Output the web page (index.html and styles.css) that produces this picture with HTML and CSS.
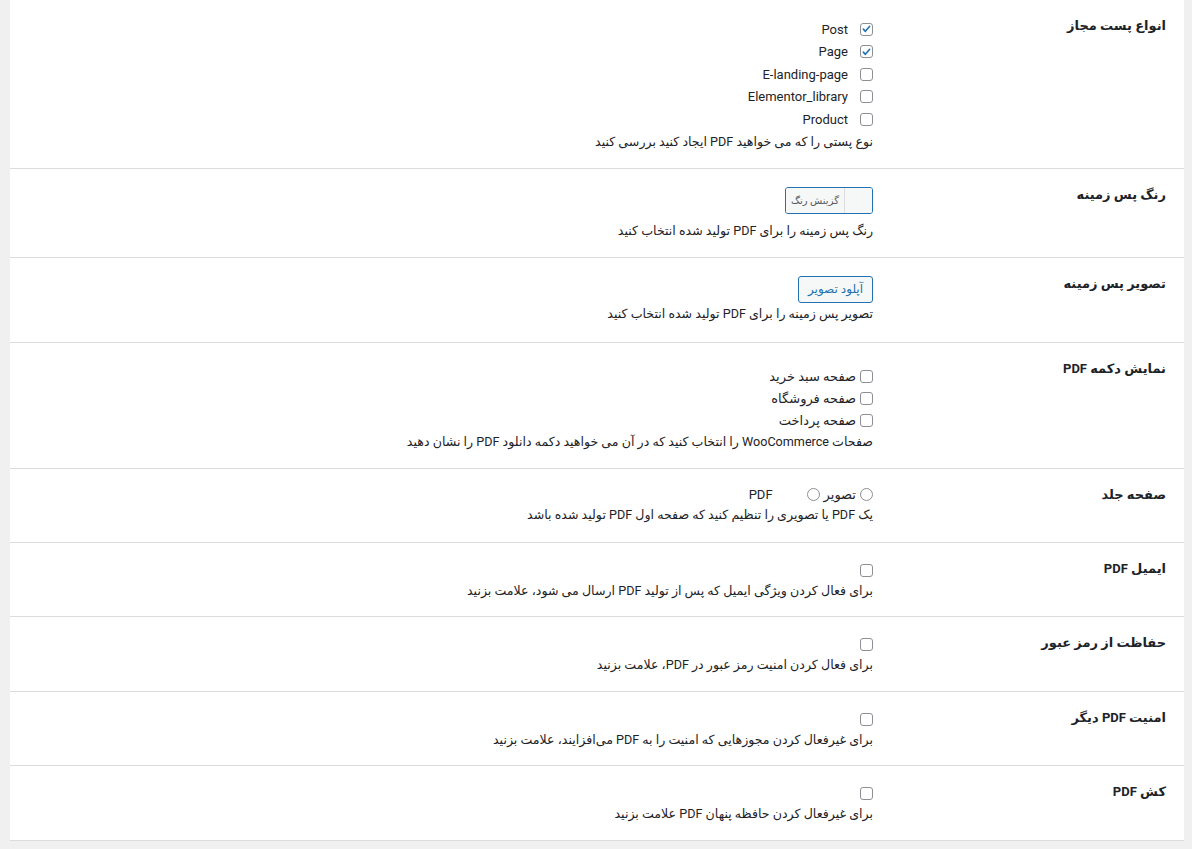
FILE: index.html
```html
<!DOCTYPE html>
<html lang="fa" dir="rtl">
<head>
<meta charset="utf-8">
<title>تنظیمات PDF</title>
<link rel="stylesheet" href="styles.css">
</head>
<body>
<div class="panel">
  <div class="row r1">
    <div class="label">انواع پست مجاز</div>
    <div class="field">
      <div class="opt spaced"><span class="cb checked"><svg viewBox="0 0 14 14"><path d="M3 7.2l2.6 2.8L11 3.6" /></svg></span><span dir="ltr">Post</span></div>
      <div class="opt spaced"><span class="cb checked"><svg viewBox="0 0 14 14"><path d="M3 7.2l2.6 2.8L11 3.6" /></svg></span><span dir="ltr">Page</span></div>
      <div class="opt spaced"><span class="cb"></span><span dir="ltr">E-landing-page</span></div>
      <div class="opt spaced"><span class="cb"></span><span dir="ltr">Elementor_library</span></div>
      <div class="opt spaced"><span class="cb"></span><span dir="ltr">Product</span></div>
      <p class="desc">نوع پستی را که می خواهید PDF ایجاد کنید بررسی کنید</p>
    </div>
  </div>
  <div class="row r2">
    <div class="label">رنگ پس زمینه</div>
    <div class="field">
      <div class="colorbtn"><span class="swatch"></span><span class="ctext">گزینش رنگ</span></div>
      <p class="desc d2">رنگ پس زمینه را برای PDF تولید شده انتخاب کنید</p>
    </div>
  </div>
  <div class="row r3">
    <div class="label">تصویر پس زمینه</div>
    <div class="field">
      <div class="upload">آپلود تصویر</div>
      <p class="desc d3">تصویر پس زمینه را برای PDF تولید شده انتخاب کنید</p>
    </div>
  </div>
  <div class="row r4">
    <div class="label">نمایش دکمه PDF</div>
    <div class="field">
      <div class="opt tight"><span class="cb"></span><span>صفحه سبد خرید</span></div>
      <div class="opt tight"><span class="cb"></span><span>صفحه فروشگاه</span></div>
      <div class="opt tight"><span class="cb"></span><span>صفحه پرداخت</span></div>
      <p class="desc">صفحات WooCommerce را انتخاب کنید که در آن می خواهید دکمه دانلود PDF را نشان دهید</p>
    </div>
  </div>
  <div class="row r5">
    <div class="label">صفحه جلد</div>
    <div class="field">
      <div class="opt radios"><span class="rd"></span><span>تصویر</span><span class="rd second"></span><span class="pdf" dir="ltr">PDF</span></div>
      <p class="desc">یک PDF یا تصویری را تنظیم کنید که صفحه اول PDF تولید شده باشد</p>
    </div>
  </div>
  <div class="row rs">
    <div class="label">ایمیل PDF</div>
    <div class="field">
      <div class="opt single"><span class="cb"></span></div>
      <p class="desc">برای فعال کردن ویژگی ایمیل که پس از تولید PDF ارسال می شود، علامت بزنید</p>
    </div>
  </div>
  <div class="row rs r75">
    <div class="label">حفاظت از رمز عبور</div>
    <div class="field">
      <div class="opt single"><span class="cb"></span></div>
      <p class="desc">برای فعال کردن امنیت رمز عبور در PDF، علامت بزنید</p>
    </div>
  </div>
  <div class="row rs">
    <div class="label">امنیت PDF دیگر</div>
    <div class="field">
      <div class="opt single"><span class="cb"></span></div>
      <p class="desc">برای غیرفعال کردن مجوزهایی که امنیت را به PDF می‌افزایند، علامت بزنید</p>
    </div>
  </div>
  <div class="row rs last">
    <div class="label">کش PDF</div>
    <div class="field">
      <div class="opt single"><span class="cb"></span></div>
      <p class="desc">برای غیرفعال کردن حافظه پنهان PDF علامت بزنید</p>
    </div>
  </div>
</div>
</body>
</html>
```

FILE: styles.css
```css
html, body {
  margin: 0;
  padding: 0;
  background: #f0f0f1;
}
body {
  font-family: Roboto, "DejaVu Sans", sans-serif;
  font-size: 13px;
  color: #1d2327;
  direction: rtl;
  height: 849px;
  overflow: hidden;
}
.panel {
  margin-left: 10px;
  margin-right: 8px;
  background: #fff;
  border-bottom: 1px solid #dcdcde;
}
.row {
  display: grid;
  grid-template-columns: 293px 1fr;
  padding-right: 18px;
  border-bottom: 1px solid #dcdcde;
  box-sizing: border-box;
}
.row.last { border-bottom: none; }
.r1 { height: 169px; }
.r2 { height: 89px; }
.r3 { height: 85px; }
.r4 { height: 126px; }
.r5 { height: 74px; }
.rs { height: 74px; }
.rs.r75 { height: 75px; }
.label {
  font-weight: bold;
  font-size: 13px;
  padding-top: 17px;
  line-height: 18px;
}
.field {
  padding-top: 18px;
}
.r4 .field { padding-top: 22px; }
.r5 .field { padding-top: 15px; }
.rs .field { padding-top: 19px; }
.opt {
  display: flex;
  align-items: center;
  height: 22.5px;
}
.opt.spaced { gap: 12px; }
.opt.tight { gap: 4px; height: 22px; }
.opt.single { height: 17px; }
.cb {
  width: 13px;
  height: 13px;
  border: 1px solid #8c8f94;
  border-radius: 3px;
  box-sizing: border-box;
  background: #fff;
  display: inline-flex;
  align-items: center;
  justify-content: center;
  flex: none;
}
.cb svg {
  width: 12px;
  height: 12px;
  fill: none;
  stroke: #2271b1;
  stroke-width: 2;
  stroke-linecap: round;
  stroke-linejoin: round;
}
.rd {
  width: 13px;
  height: 13px;
  border: 1px solid #8c8f94;
  border-radius: 50%;
  box-sizing: border-box;
  flex: none;
}
.radios { gap: 4px; height: 20px; }
.pdf { margin-right: 30px; }
.desc {
  margin: 0;
  line-height: 22px;
  font-size: 12.6px;
}
.rs .desc { line-height: 23px; }
.colorbtn {
  display: inline-flex;
  width: 88px;
  height: 27px;
  border: 1px solid #2271b1;
  border-radius: 3px;
  box-sizing: border-box;
  overflow: hidden;
  background: #f6f7f7;
}
.swatch {
  width: 27px;
  border-left: 1px solid #dcdcde;
  background: #f6f7f7;
}
.ctext {
  flex: 1;
  font-size: 10px;
  line-height: 25px;
  text-align: center;
  color: #50575e;
  background: #f6f7f7;
}
.d2 { margin-top: 4px; }
.upload {
  display: inline-block;
  height: 27px;
  width: 75px;
  box-sizing: border-box;
  border: 1px solid #2271b1;
  border-radius: 3px;
  background: #f6f7f7;
  color: #2271b1;
  font-size: 12px;
  line-height: 25px;
  text-align: center;
}
.d3 { margin-top: 0; }
```
